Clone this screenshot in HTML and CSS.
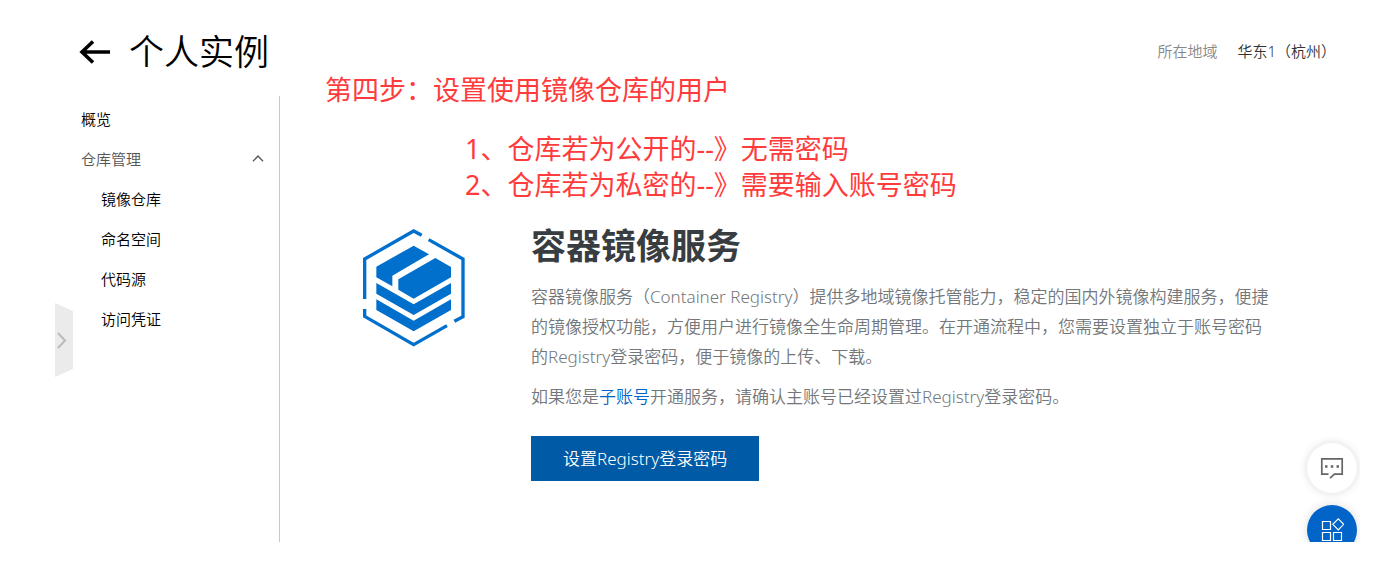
FILE: index.html
```html
<!DOCTYPE html>
<html lang="zh-CN">
<head>
<meta charset="utf-8">
<title>个人实例</title>
<link rel="stylesheet" href="styles.css">
</head>
<body>
<div class="shell">
  <header class="header">
    <button class="back" type="button" aria-label="返回">
      <svg width="32" height="24" viewBox="0 0 32 24" fill="none" stroke="#000" stroke-width="3.600"><path d="M31 12H3M14 1.500L3 12l11 10.500"/></svg>
    </button>
    <h1 class="title">个人实例</h1>
    <div class="region"><span class="region-label">所在地域</span><span>华东1（杭州）</span></div>
  </header>
  <div class="body">
    <nav class="sidebar">
      <a class="nav-item" href="#">概览</a>
      <button class="nav-item nav-group" type="button" aria-expanded="true">仓库管理
        <svg width="12" height="8" viewBox="0 0 12 8" fill="none" stroke="#555" stroke-width="1.300"><path d="M1 6.300L6 1l5 5.300"/></svg>
      </button>
      <a class="nav-item nav-child" href="#">镜像仓库</a>
      <a class="nav-item nav-child" href="#">命名空间</a>
      <a class="nav-item nav-child" href="#">代码源</a>
      <a class="nav-item nav-child" href="#">访问凭证</a>
    </nav>
    <main class="main">
      <svg class="logo" width="104" height="118" viewBox="65 42 312 354" aria-hidden="true">
        <g fill="none" stroke="#0070cc" stroke-width="10">
          <path d="M73 252V132L220 48l24 13"/>
          <path d="M265 74l103 58v173l-26 14"/>
          <path d="M320 332l-100 57L73 304v-22"/>
        </g>
        <g fill="#0070cc">
          <path d="M220 92l46 26-110 64v32l-48-27v-32z"/>
          <path d="M285 129l47 27v31l-112 64-46-27v-31z"/>
          <path d="M108 204l112 64 112-64v32l-112 64-112-64z"/>
          <path d="M108 253l112 64 112-64v32l-112 64-112-64z"/>
        </g>
      </svg>
      <section class="intro">
        <h2 class="intro-title">容器镜像服务</h2>
        <p class="text">容器镜像服务（Container Registry）提供多地域镜像托管能力，稳定的国内外镜像构建服务，便捷<br>的镜像授权功能，方便用户进行镜像全生命周期管理。在开通流程中，您需要设置独立于账号密码<br>的Registry登录密码，便于镜像的上传、下载。</p>
        <p class="text">如果您是<a class="link" href="#">子账号</a>开通服务，请确认主账号已经设置过Registry登录密码。</p>
        <button class="primary" type="button">设置Registry登录密码</button>
      </section>
    </main>
  </div>
  <div class="note">
    <p class="note-line">第四步：设置使用镜像仓库的用户</p>
    <ol class="note-list">
      <li class="note-line">1、仓库若为公开的--》无需密码</li>
      <li class="note-line">2、仓库若为私密的--》需要输入账号密码</li>
    </ol>
  </div>
  <button class="handle" type="button" aria-label="展开">
    <svg width="18" height="74" viewBox="0 0 18 74"><path fill="#ebebeb" d="M0 0l18 8v58L0 74z"/><path fill="none" stroke="#bbb" stroke-width="2" d="M3 30l7 7.500L3 45"/></svg>
  </button>
  <div class="floats">
    <button class="float" type="button" aria-label="咨询">
      <svg width="24" height="22" viewBox="0 0 24 22" fill="none" stroke="#666" stroke-width="1.700"><path d="M8.500 17.200H1.800V1.800h20.400v15.400h-7.700l-4.500 4"/><path stroke-width="2.500" d="M5 9.500h2.500M10.800 9.500h2.500M16.500 9.500H19"/></svg>
    </button>
    <button class="float float-blue" type="button" aria-label="应用">
      <svg width="24" height="26" viewBox="0 0 24 26" fill="none" stroke="#fff" stroke-width="1.200"><path d="M2.500 4.500h8v8h-8zM2.500 15.500h8v8h-8zM13.500 15.500h8v8h-8zM18.300 1.800l5.400 5.500-5.400 5.500-5.500-5.500z"/></svg>
    </button>
  </div>
</div>
</body>
</html>
```
FILE: styles.css
```css
* { box-sizing: border-box; }
body {
  margin: 0;
  background: #fff;
  color: #000;
  font-family: "Noto Sans", "Noto Sans CJK SC", sans-serif;
  font-size: 15px;
  font-weight: 350;
}
button {
  border: 0;
  padding: 0;
  background: none;
  font: inherit;
  color: inherit;
  cursor: pointer;
}
a { color: inherit; text-decoration: none; }
h1, h2, p, ol { margin: 0; padding: 0; }
svg { display: block; flex: none; }

.shell {
  position: relative;
  display: flex;
  flex-direction: column;
  min-height: calc(100vh - 21px);
  margin-right: 22px;
  padding-left: 55px;
  overflow: hidden;
}
.header {
  display: flex;
  align-items: center;
  height: 96px;
  padding: 8px 24px 0 24px;
}
.title {
  margin-left: 18px;
  font-size: 35px;
  font-weight: 350;
  line-height: 48px;
}
.region {
  display: flex;
  gap: 20px;
  margin-left: auto;
  padding-bottom: 4px;
  color: #333;
}
.region-label { color: #888; }

.body { display: flex; flex: 1; }
.sidebar {
  flex: none;
  display: flex;
  flex-direction: column;
  width: 225px;
  padding: 3px 15px 0 26px;
  border-right: 1px solid #c8c8c8;
}
.nav-item { line-height: 40px; text-align: left; }
.nav-group {
  display: flex;
  align-items: center;
  justify-content: space-between;
  color: #555;
}
.nav-child { padding-left: 20px; }

.main {
  flex: 1;
  display: flex;
  align-items: flex-start;
  gap: 65px;
  padding: 126px 70px 61px 82px;
}
.logo { margin-top: 7px; }
.intro { white-space: nowrap; }
.intro-title {
  margin-bottom: 12px;
  color: #373d41;
  font-size: 35px;
  font-weight: 700;
  line-height: 48px;
}
.text {
  margin-bottom: 10px;
  color: #73777a;
  font-size: 17px;
  line-height: 30px;
}
.link { color: #0064c8; }
.primary {
  height: 45px;
  margin-top: 14px;
  padding: 0 32px 2px;
  background: #005aa5;
  color: #fff;
  font-size: 17px;
}

.note {
  position: absolute;
  top: 72px;
  left: 325px;
  color: #ff3b3b;
  font-weight: 400;
}
.note-line { font-size: 27px; line-height: 36px; }
.note-list { margin-top: 23px; padding-left: 140px; list-style: none; }

.handle { position: absolute; top: 303px; left: 55px; }
.floats {
  position: absolute;
  right: 3px;
  bottom: -13px;
  display: flex;
  flex-direction: column;
  gap: 12px;
}
.float {
  display: flex;
  align-items: center;
  justify-content: center;
  width: 50px;
  height: 50px;
  border-radius: 50%;
  background: #fff;
  box-shadow: 0 0 10px rgba(0, 0, 0, 0.15);
}
.float-blue { background: #0064c8; }
```
